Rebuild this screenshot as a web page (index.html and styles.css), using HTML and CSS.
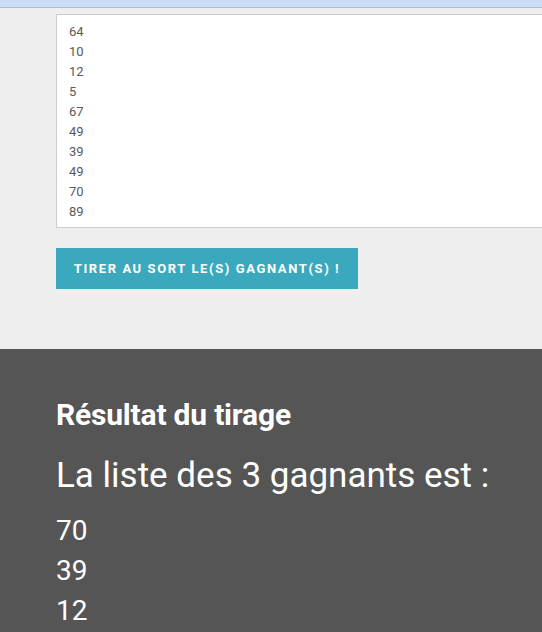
FILE: index.html
```html
<!DOCTYPE html>
<html lang="fr">
<head>
    <meta charset="UTF-8">
    <meta name="viewport" content="width=device-width, initial-scale=1.0">
    <title>Tirage au sort</title>
    <link rel="stylesheet" href="styles.css">
</head>
<body>
    <div class="topbar"></div>
    <div class="form-zone">
        <div class="entries">
            <div>64</div>
            <div>10</div>
            <div>12</div>
            <div>5</div>
            <div>67</div>
            <div>49</div>
            <div>39</div>
            <div>49</div>
            <div>70</div>
            <div>89</div>
        </div>
        <button class="draw-btn">Tirer au sort le(s) gagnant(s) !</button>
    </div>
    <div class="result-zone">
        <h2>Résultat du tirage</h2>
        <p class="intro">La liste des 3 gagnants est :</p>
        <div class="winners">
            <div>70</div>
            <div>39</div>
            <div>12</div>
        </div>
    </div>
</body>
</html>
```

FILE: styles.css
```css
* {
    margin: 0;
    padding: 0;
    box-sizing: border-box;
}

body {
    font-family: Roboto, "Liberation Sans", sans-serif;
    background-color: #eeeeee;
    overflow: hidden;
}

.topbar {
    height: 8px;
    background-color: #cbdcf5;
    border-bottom: 1px solid #a9bcd8;
}

.form-zone {
    padding: 6px 0 0 56px;
    height: 341px;
}

.entries {
    width: 500px;
    height: 214px;
    background-color: #fff;
    border: 1px solid #cccccc;
    padding: 7px 12px;
    font-size: 13px;
    line-height: 20px;
    color: #5a5a5a;
}

.draw-btn {
    margin-top: 20px;
    width: 302px;
    height: 41px;
    background-color: #3aa9bd;
    color: #fff;
    border: none;
    font-family: Roboto, "Liberation Sans", sans-serif;
    font-weight: bold;
    font-size: 13px;
    letter-spacing: 1.6px;
    text-transform: uppercase;
}

.result-zone {
    background-color: #555555;
    color: #fff;
    padding: 50px 0 0 56px;
    height: 300px;
}

.result-zone h2 {
    font-size: 30px;
    font-weight: bold;
    letter-spacing: -0.2px;
    line-height: 32px;
}

.intro {
    margin-top: 25px;
    font-size: 35px;
    line-height: 40px;
}

.winners {
    margin-top: 15px;
    font-size: 28px;
    line-height: 40px;
}
```
